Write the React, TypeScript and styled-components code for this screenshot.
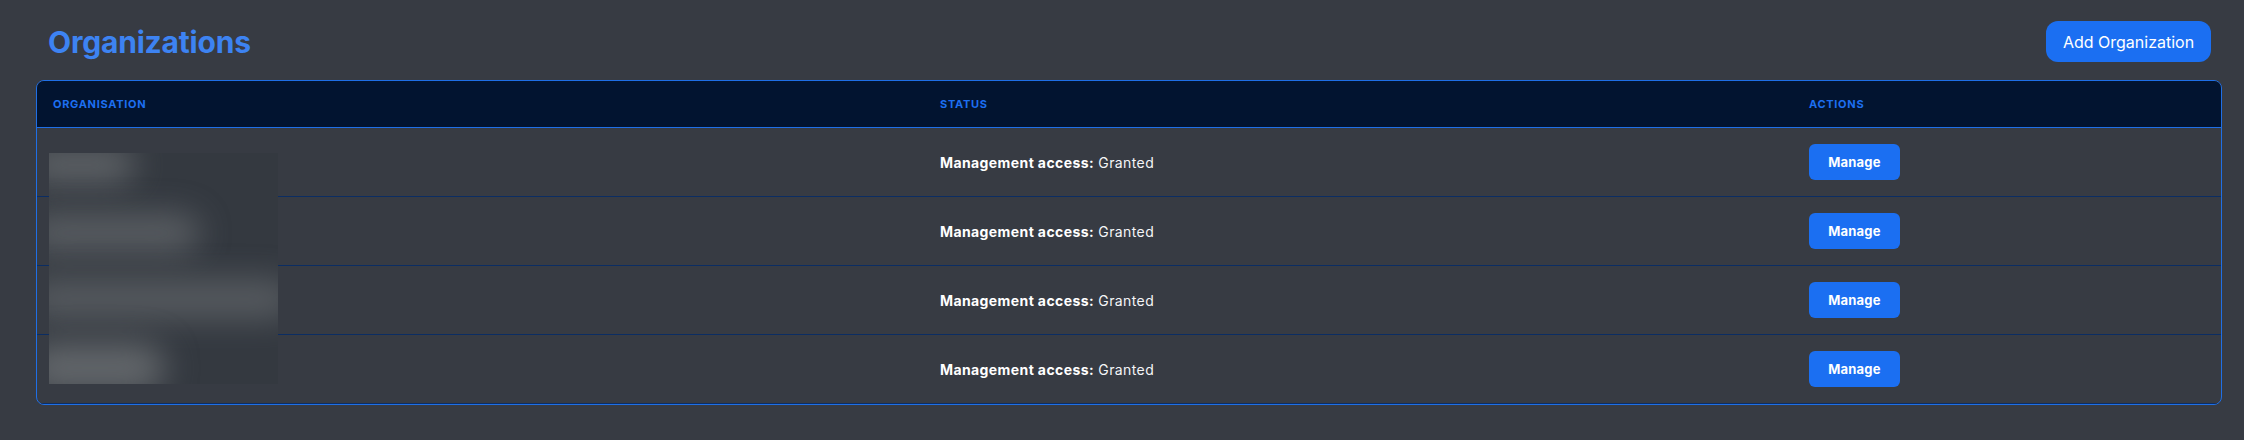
import { FunctionComponent } from "react";
import styled, { createGlobalStyle } from "styled-components";

interface Organisation {
  id: number;
  status: string;
}

const organisations: Organisation[] = [
  { id: 1, status: "Granted" },
  { id: 2, status: "Granted" },
  { id: 3, status: "Granted" },
  { id: 4, status: "Granted" },
];

// redacted names, drawn as soft blurred bars over the first column
const blobs = [
  { top: -6, height: 36, width: 110, strength: 0.95 },
  { top: 60, height: 40, width: 175, strength: 0.8 },
  { top: 126, height: 40, width: 270, strength: 0.75 },
  { top: 190, height: 50, width: 140, strength: 1 },
];

const App: FunctionComponent = () => {
  return (
    <Page>
      <GlobalStyle />
      <TopBar>
        <Title>Organizations</Title>
        <AddButton>Add Organization</AddButton>
      </TopBar>
      <Table>
        <HeaderRow>
          <HeadCell>Organisation</HeadCell>
          <HeadCell>Status</HeadCell>
          <HeadCell>Actions</HeadCell>
        </HeaderRow>
        {organisations.map((org) => (
          <Row key={org.id}>
            <Cell />
            <Cell>
              <Status>
                <b>Management access:</b> {org.status}
              </Status>
            </Cell>
            <Cell>
              <ManageButton>Manage</ManageButton>
            </Cell>
          </Row>
        ))}
        <Redaction>
          {blobs.map((b, i) => (
            <Blob
              key={i}
              style={{
                top: b.top,
                height: b.height,
                width: b.width,
                opacity: b.strength,
              }}
            />
          ))}
        </Redaction>
      </Table>
    </Page>
  );
};

export default App;

const GlobalStyle = createGlobalStyle`
  html, body {
    margin: 0;
    background: #373b43;
  }
  body {
    font-family: Inter, "Noto Sans", sans-serif;
    color: #ffffff;
  }
`;

const Page = styled.div`
  padding: 21px 22px 0 36px;
  height: 440px;
  box-sizing: border-box;
  overflow: hidden;
`;

const TopBar = styled.div`
  display: flex;
  justify-content: space-between;
  align-items: center;
  height: 41px;
  margin-bottom: 18px;
`;

const Title = styled.h1`
  margin: 0 0 0 12px;
  font-size: 30px;
  font-weight: 700;
  letter-spacing: -0.2px;
  color: #3d83f2;
`;

const AddButton = styled.button`
  margin-right: 11px;
  width: 165px;
  height: 41px;
  border: none;
  border-radius: 12px;
  background: #1b6ff2;
  color: #ffffff;
  font-family: inherit;
  font-size: 16px;
  font-weight: 400;
  cursor: pointer;
`;

const Table = styled.div`
  position: relative;
  border: 1px solid #1f6fe6;
  border-radius: 8px;
  overflow: hidden;
`;

const HeaderRow = styled.div`
  display: grid;
  grid-template-columns: 887px 869px 1fr;
  height: 46px;
  align-items: center;
  background: #021430;
  border-bottom: 1px solid #1f6fe6;
`;

const HeadCell = styled.div`
  padding-left: 16px;
  font-size: 11px;
  font-weight: 700;
  letter-spacing: 0.7px;
  text-transform: uppercase;
  color: #1d6ff0;
`;

const Row = styled.div`
  display: grid;
  grid-template-columns: 887px 869px 1fr;
  height: 68px;
  align-items: center;
  border-bottom: 1px solid #0b2d63;
  &:last-of-type {
    border-bottom: none;
  }
`;

const Cell = styled.div`
  padding-left: 16px;
  display: flex;
  align-items: center;
`;

const Status = styled.span`
  font-size: 14px;
  letter-spacing: 0.4px;
  color: #f4f5f7;
  b {
    font-weight: 700;
    color: #ffffff;
  }
`;

const ManageButton = styled.button`
  width: 91px;
  height: 36px;
  border: none;
  border-radius: 6px;
  background: #1b6ff2;
  color: #ffffff;
  font-family: inherit;
  font-size: 13px;
  font-weight: 700;
  letter-spacing: 0.2px;
  cursor: pointer;
`;

const Redaction = styled.div`
  position: absolute;
  left: 12px;
  top: 72px;
  width: 229px;
  height: 231px;
  background: #343940;
  overflow: hidden;
`;

const Blob = styled.div`
  position: absolute;
  left: -24px;
  background: #62666a;
  border-radius: 30px;
  filter: blur(16px);
`;
